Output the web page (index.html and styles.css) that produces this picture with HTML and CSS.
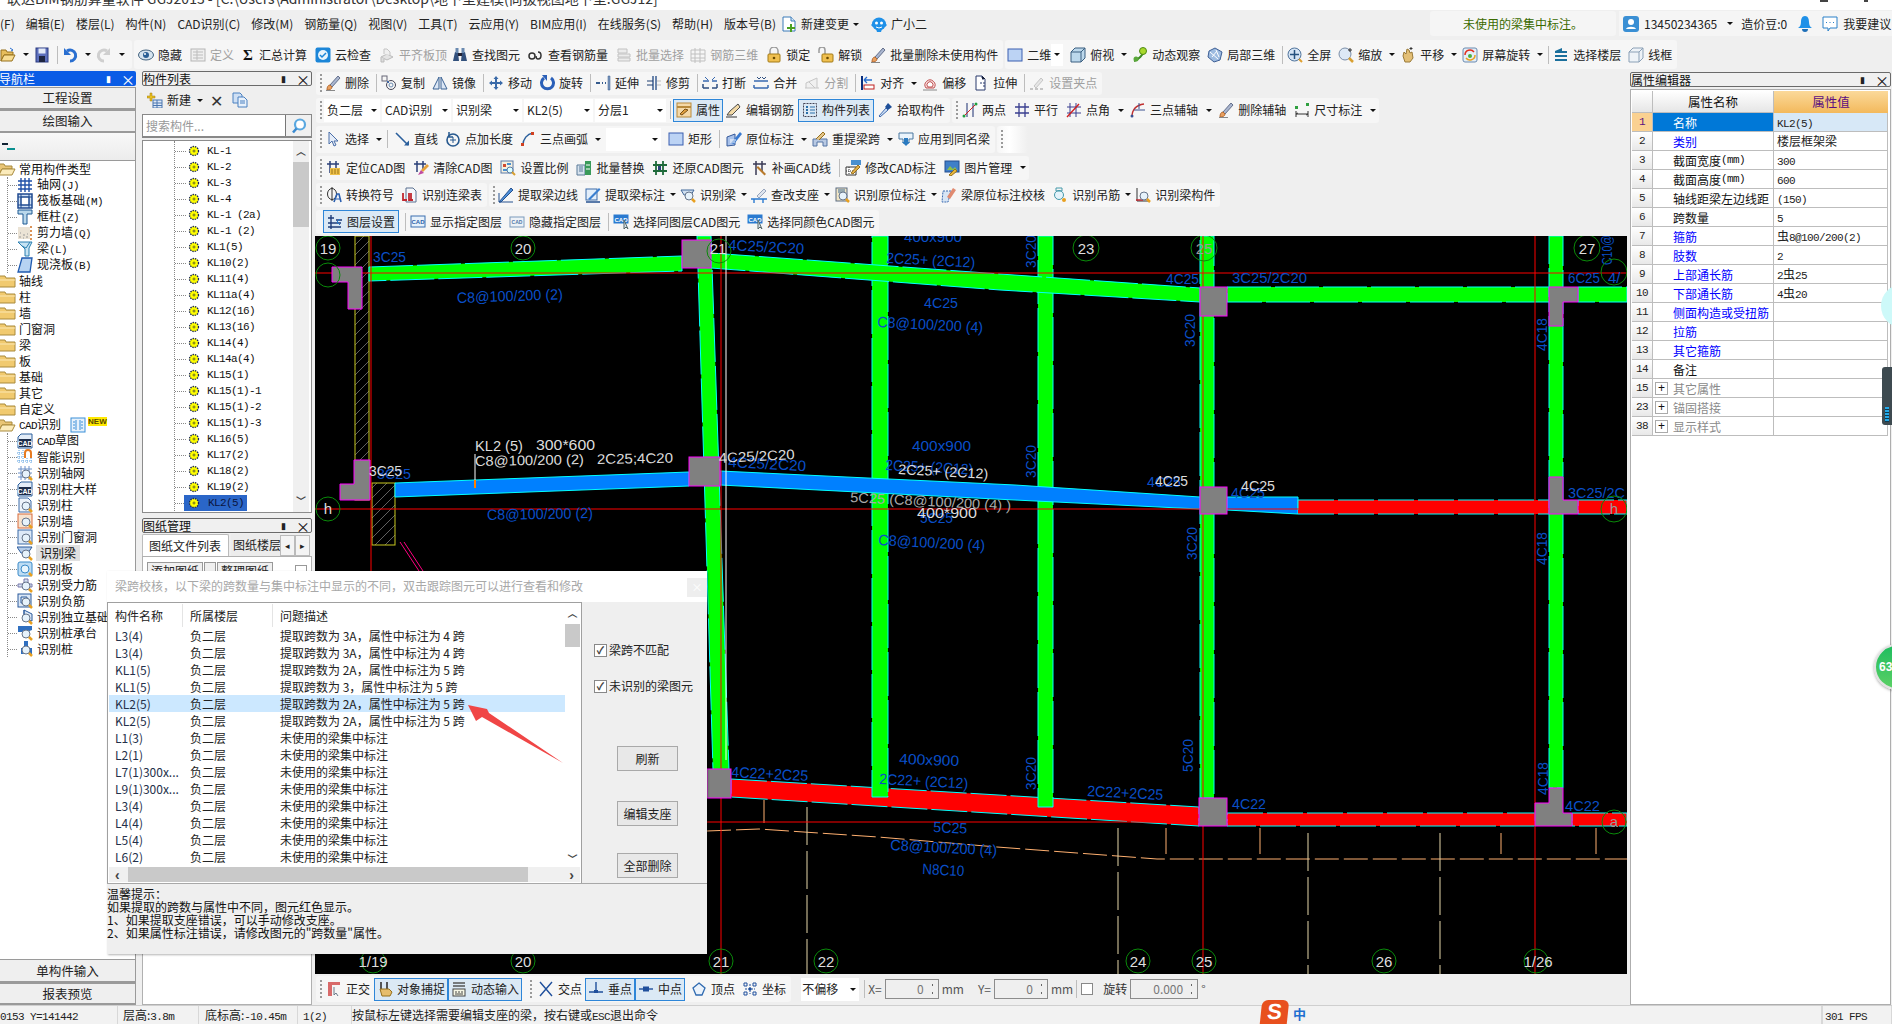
FILE: index.html
```html
<!DOCTYPE html>
<html lang="zh-CN">
<head>
<meta charset="utf-8">
<title>广联达BIM钢筋算量软件 GGJ2013</title>
<link rel="stylesheet" href="styles.css">
</head>
<body>
<svg class="defs" xmlns="http://www.w3.org/2000/svg">
<defs>
<symbol id="open" viewBox="0 0 16 16"><path d="M1 3h5l1 2h6v3H4l-3 6z" fill="#e6bd5c" stroke="#96701c"/><path d="M4 8h11l-3 6H1z" fill="#f7dc92" stroke="#96701c"/><path d="M10 1l3 2-2 1" fill="none" stroke="#2a6fd0"/></symbol>
<symbol id="save" viewBox="0 0 16 16"><rect x="2" y="1" width="12" height="14" fill="#5d6fbc" stroke="#2a3a80"/><rect x="4.500" y="1.500" width="7" height="5" fill="#e4eaf7"/><rect x="5" y="9" width="6" height="6" fill="#1d2440"/></symbol>
<symbol id="undo" viewBox="0 0 16 16"><path d="M5 4A5.500 5.500 0 1 1 8 14" fill="none" stroke="#2a6fd0" stroke-width="3"/><path d="M2 1v7h7z" fill="#2a6fd0"/></symbol>
<symbol id="redo" viewBox="0 0 16 16"><path d="M11 4A5.500 5.500 0 1 0 8 14" fill="none" stroke="#cfcfcf" stroke-width="3"/><path d="M14 1v7H7z" fill="#cfcfcf"/></symbol>
<symbol id="eye" viewBox="0 0 16 16"><ellipse cx="8" cy="8" rx="7.500" ry="5" fill="#d6e4ef" stroke="#40607c"/><circle cx="8" cy="8" r="3" fill="#2a5f95"/><circle cx="7" cy="7" r="1" fill="#fff"/></symbol>
<symbol id="def" viewBox="0 0 16 16"><rect x="1" y="2" width="14" height="12" fill="#efefef" stroke="#b5b5b5"/><path d="M3 5h10M3 8h10M3 11h10M7 3v10" stroke="#bdbdbd"/></symbol>
<symbol id="cloud" viewBox="0 0 16 16"><rect x="0.500" y="0.500" width="15" height="15" rx="2" fill="#1c86d8"/><circle cx="8" cy="8" r="5" fill="#e8f4fc"/><path d="M5 8l2 2 4-4" fill="none" stroke="#1c86d8" stroke-width="1.500"/></symbol>
<symbol id="flat" viewBox="0 0 16 16"><path d="M2 10l6-3 6 3-6 3z" fill="#e4e4e4" stroke="#bbb"/><path d="M5 7V2h3l3 3v3" fill="#f0f0f0" stroke="#c4c4c4"/><path d="M2 10v5h3v-3" fill="#ddd" stroke="#bbb"/></symbol>
<symbol id="binoc" viewBox="0 0 16 16"><path d="M1 14l2-9h3l1 9zM9 14l1-9h3l2 9z" fill="#32507c"/><rect x="3.500" y="1" width="3" height="5" fill="#6a8ab0"/><rect x="9.500" y="1" width="3" height="5" fill="#6a8ab0"/><rect x="6" y="6" width="4" height="3" fill="#223"/></symbol>
<symbol id="look" viewBox="0 0 16 16"><circle cx="4" cy="9" r="3" fill="none" stroke="#333" stroke-width="1.500"/><path d="M10 5c4 0 4 7 0 7-2 0-2-2-2-3" fill="none" stroke="#333" stroke-width="1.500"/></symbol>
<symbol id="batch" viewBox="0 0 16 16"><path d="M2 2h9v4H2zM2 7h12v3H2zM2 11h12v3H2z" fill="#ececec" stroke="#c2c2c2"/></symbol>
<symbol id="cage" viewBox="0 0 16 16"><path d="M1 3h14v11H1zM5 1v15M10 1v15M1 7h14M1 11h14" fill="none" stroke="#c0c0c0"/></symbol>
<symbol id="lock" viewBox="0 0 16 16"><path d="M4 7V4a4 4 0 0 1 8 0v3" fill="none" stroke="#9b9b9b" stroke-width="1.500"/><rect x="2" y="7" width="12" height="8" rx="1" fill="#f0c050" stroke="#a37a16"/><circle cx="8" cy="11" r="1.300" fill="#6a4a00"/></symbol>
<symbol id="unlock" viewBox="0 0 16 16"><path d="M1 6V3a3 3 0 0 1 6 0v4" fill="none" stroke="#9b9b9b" stroke-width="1.500"/><rect x="4" y="7" width="11" height="8" rx="1" fill="#f0c050" stroke="#a37a16"/><circle cx="9.500" cy="11" r="1.300" fill="#6a4a00"/></symbol>
<symbol id="brush" viewBox="0 0 16 16"><path d="M5 10L13 1l2 2-8 9z" fill="#aab6cf" stroke="#64708c"/><path d="M2 15c0-3 1-5 3-5l2 2c0 2-2 3-5 3z" fill="#e8a060" stroke="#b56a30"/><path d="M1 15.500h9" stroke="#888"/></symbol>
<symbol id="sq2d" viewBox="0 0 16 16"><rect x="1" y="2" width="14" height="12" fill="#bcd3f4" stroke="#3a5fb0"/></symbol>
<symbol id="cube" viewBox="0 0 16 16"><path d="M1 5l4-4h10v10l-4 4H1z" fill="#bcd8ec" stroke="#3a5f80"/><path d="M1 5h10v10M11 5l4-4" fill="none" stroke="#3a5f80"/></symbol>
<symbol id="orbit" viewBox="0 0 16 16"><path d="M2 14c4-1 9-6 11-11" fill="none" stroke="#3b8a20" stroke-width="2"/><circle cx="11" cy="4" r="3.500" fill="#a9d82c" stroke="#4e8a14"/><circle cx="4" cy="12" r="2.500" fill="#5aa83a"/></symbol>
<symbol id="part3d" viewBox="0 0 16 16"><path d="M8 1l7 4-2 8-6 2-6-5 1-6z" fill="#9dbbe0" stroke="#3e5f95"/><path d="M3 5l8 7M9 3l3 7M5 10l5-6" stroke="#fff"/></symbol>
<symbol id="zfull" viewBox="0 0 16 16"><circle cx="7.500" cy="7.500" r="6.500" fill="#d4e3f4" stroke="#50749c"/><path d="M7.500 3v9M3 7.500h9" stroke="#24507e" stroke-width="1.500"/><path d="M12 12l3 3" stroke="#e0a030" stroke-width="2"/></symbol>
<symbol id="zin" viewBox="0 0 16 16"><circle cx="7" cy="7" r="6" fill="#dde9f6" stroke="#7b8ea8"/><path d="M11 11l4 4" stroke="#d9a030" stroke-width="2.500"/><path d="M12 1v4M10 3h4" stroke="#333"/></symbol>
<symbol id="hand" viewBox="0 0 16 16"><path d="M3 9l1-4 2 2 1-5 2 1 1 3 2-1 1 6-3 4H5z" fill="#e3bf76" stroke="#9a7a38"/><path d="M11 0v3M9.500 1.500h3" stroke="#333"/></symbol>
<symbol id="rot" viewBox="0 0 16 16"><rect x="1" y="1" width="14" height="14" rx="2" fill="#e4eef7" stroke="#6a8ab0"/><path d="M3 8a5 5 0 0 1 9-3" fill="none" stroke="#e03020" stroke-width="1.500"/><path d="M13 8a5 5 0 0 1-9 3" fill="none" stroke="#e8a020" stroke-width="1.500"/><circle cx="8" cy="9" r="2" fill="#4bb040"/></symbol>
<symbol id="layers" viewBox="0 0 16 16"><path d="M2 4l7-3v3h5v2H2zM2 8h12v2H2zM2 12h12v2H2z" fill="#1a6f9c"/></symbol>
<symbol id="wire" viewBox="0 0 16 16"><path d="M1 5l4-4h10v10l-4 4H1zM1 5h10v10M11 5l4-4" fill="#eef3f8" stroke="#8ba0b6"/></symbol>
<symbol id="copy" viewBox="0 0 16 16"><rect x="1" y="1" width="5" height="5" fill="none" stroke="#667"/><circle cx="10" cy="10" r="4.500" fill="none" stroke="#445"/><circle cx="10" cy="10" r="2" fill="none" stroke="#6a8ab0"/><path d="M6 6l2 2" stroke="#2a6fd0"/></symbol>
<symbol id="mirror" viewBox="0 0 16 16"><path d="M7 2v12H1zM9 2v12h6z" fill="#dce7f5" stroke="#3b6294"/></symbol>
<symbol id="move" viewBox="0 0 16 16"><path d="M8 1l2.500 3H9v3h3V5.500l3 2.500-3 2.500V9H9v3h1.500L8 15l-2.500-3H7V9H4v1.500L1 8l3-2.500V7h3V4H5.500z" fill="#3a6aa8"/></symbol>
<symbol id="rotate" viewBox="0 0 16 16"><path d="M5 3A6 6 0 1 0 12 3" fill="none" stroke="#2a5fb8" stroke-width="3"/><path d="M3 0h5v6z" fill="#2a5fb8"/></symbol>
<symbol id="extend" viewBox="0 0 16 16"><path d="M1 8h4M7 8h1M10 8h1" stroke="#345a8c" stroke-width="2"/><path d="M13 1h2v14h-2z" fill="#7d99bf" stroke="#345a8c" stroke-width=".5"/></symbol>
<symbol id="trim" viewBox="0 0 16 16"><path d="M7 1v14M10 1v14" stroke="#3d5f92" stroke-width="1.500"/><path d="M1 6h6M1 10h6" stroke="#1f3f72" stroke-width="1.200"/><path d="M11 6h4M11 10h4" stroke="#bbb"/></symbol>
<symbol id="break" viewBox="0 0 16 16"><path d="M1 6h6M10 6h5" stroke="#3a6ab0" stroke-width="1.500"/><path d="M1 13h6M10 13h5M1 9v4M15 9v4" stroke="#2f4f80" stroke-width="1.500"/><path d="M3 2l3 3M13 2l-3 3" stroke="#3a6ab0"/></symbol>
<symbol id="merge" viewBox="0 0 16 16"><path d="M1 6h14M1 13h14M1 10v3M15 10v3" stroke="#3a6ab0" stroke-width="1.500"/><path d="M4 2l2 2 2-2M9 2l2 2 2-2" fill="none" stroke="#2f4f80"/></symbol>
<symbol id="split" viewBox="0 0 16 16"><path d="M1 13h14M2 13V8l11-5v10M5 7l6 6" fill="#f0f0f0" stroke="#c6c6c6"/></symbol>
<symbol id="align" viewBox="0 0 16 16"><path d="M2 1v14" stroke="#0a2f80" stroke-width="2"/><rect x="4" y="10" width="10" height="4" fill="#fff" stroke="#c02020"/><path d="M4 5h8M4 5l3-3M4 5l3 3" fill="none" stroke="#2a6fd0" stroke-width="1.300"/></symbol>
<symbol id="offset" viewBox="0 0 16 16"><path d="M4 13a5 5 0 1 1 8 0z" fill="#f9e0e0" stroke="#c05050"/><path d="M6 12a3 3 0 1 1 4 0z" fill="#fff" stroke="#c05050"/><path d="M1 15h14" stroke="#888"/></symbol>
<symbol id="stretch" viewBox="0 0 16 16"><path d="M3 1h6l3 3v11H3z" fill="#fff" stroke="#2a3a6c"/><path d="M9 1v3h3M7 8h5M12 11h-2" stroke="#2a3a6c" stroke-dasharray="2 1"/></symbol>
<symbol id="grip" viewBox="0 0 16 16"><path d="M5 11l7-8 2 2-7 8z" fill="#e6e6e6" stroke="#c5c5c5"/><path d="M1 14h3M6 14h3M11 14h3" stroke="#c5c5c5" stroke-width="2"/></symbol>
<symbol id="prop" viewBox="0 0 16 16"><rect x="1" y="1" width="14" height="14" fill="#f5d9a8" stroke="#b98a3c"/><path d="M1 5h14" stroke="#b98a3c" stroke-width="2"/><path d="M4 12l5-5 3 1-6 5z" fill="#e0a040" stroke="#7a5014"/></symbol>
<symbol id="edit" viewBox="0 0 16 16"><path d="M1 13h5l8-8-2-3-8 7z" fill="#f2d9a6" stroke="#4a4a4a"/><path d="M0 15h11" stroke="#333"/></symbol>
<symbol id="list" viewBox="0 0 16 16"><rect x="1.500" y="1.500" width="13" height="13" fill="none" stroke="#445" stroke-dasharray="2 1"/><path d="M4 4h2v2H4zM4 7h2v2H4zM4 10h2v2H4z" fill="#2a6fa8"/><path d="M8 5h5M8 8h5M8 11h5" stroke="#2a6fa8"/></symbol>
<symbol id="pick" viewBox="0 0 16 16"><path d="M2 14l7-8 2 2-8 7z" fill="#cfe0f4" stroke="#3f6ab0"/><path d="M8 5l3-4 4 4-4 3z" fill="#1f4f98"/></symbol>
<symbol id="twop" viewBox="0 0 16 16"><path d="M5 1v14M11 1v14" stroke="#1a2f70"/><path d="M2 14L14 2" stroke="#d02020"/><circle cx="2" cy="14" r="1.500" fill="#20a040"/><circle cx="14" cy="2" r="1.500" fill="#20a040"/></symbol>
<symbol id="para" viewBox="0 0 16 16"><path d="M5 1v14M11 1v14M1 5h14M1 11h14" stroke="#3a3f90" stroke-width="1.300"/></symbol>
<symbol id="ptang" viewBox="0 0 16 16"><path d="M4 1v14M10 1v14M1 5h14M1 11h14" stroke="#3a3f90"/><path d="M1 15L13 2" stroke="#d02020" stroke-width="1.400"/></symbol>
<symbol id="arc3" viewBox="0 0 16 16"><path d="M2 15C2 7 7 3 14 2" fill="none" stroke="#c03030" stroke-width="1.300"/><path d="M4 8h11M9 1v6" stroke="#3a5090"/><circle cx="2" cy="14" r="1.500" fill="#3a5090"/></symbol>
<symbol id="dim" viewBox="0 0 16 16"><path d="M2 12h12M2 9v6M14 9v6M2 12l2-1M14 12l-2 1" stroke="#333"/><rect x="1" y="4" width="3" height="3" fill="#30a040"/><rect x="12" y="1" width="3" height="3" fill="#30a040"/></symbol>
<symbol id="cursor" viewBox="0 0 16 16"><path d="M4 1v12l3-3 2 5 2-1-2-4h4z" fill="#e4ecf8" stroke="#4a6ea8"/></symbol>
<symbol id="line" viewBox="0 0 16 16"><path d="M2 2l12 12" stroke="#2a5f9c" stroke-width="1.600"/><path d="M10 14.500h5v-5z" fill="#2a5f9c"/></symbol>
<symbol id="ptlen" viewBox="0 0 16 16"><circle cx="8" cy="9" r="6" fill="none" stroke="#27598f" stroke-width="1.600"/><path d="M8 6v6M5 9h6" stroke="#27598f"/><path d="M4 1v5h4" fill="none" stroke="#27598f" stroke-width="1.500"/></symbol>
<symbol id="arc" viewBox="0 0 16 16"><path d="M3 14C3 8 7 3 13 2" fill="none" stroke="#2a5f9c" stroke-width="1.500"/><rect x="1" y="12" width="3" height="3" fill="#d04020"/><rect x="11" y="1" width="3" height="3" fill="#d04020"/></symbol>
<symbol id="orig" viewBox="0 0 16 16"><path d="M1 6l8-3v11l-8 1z" fill="#a9c2ea" stroke="#34599a"/><path d="M5 12L14 1l2 2-8 10z" fill="#3a7ad0"/><path d="M4 9h6M4 11h5" stroke="#fff"/></symbol>
<symbol id="remap" viewBox="0 0 16 16"><path d="M1 15V8h14v7h-4v-4H5v4z" fill="#b8c9e3" stroke="#5574a4"/><path d="M4 8L11 1l2 2-6 6" fill="#e3c48a" stroke="#96701c"/></symbol>
<symbol id="apply" viewBox="0 0 16 16"><path d="M1 2h14v6h-4v4H5V8H1z" fill="#eaf4fc" stroke="#49779f"/><path d="M6 7h4v4h2l-4 4-4-4h2z" fill="#2a7ac0"/></symbol>
<symbol id="cadp" viewBox="0 0 16 16"><path d="M4 1v12M10 1v12M1 4h12" stroke="#2a3f78" stroke-width="1.500"/><path d="M4 8h10v7H4z" fill="#efc14a"/><path d="M6 9v5M9 9v5M12 9v5" stroke="#9a7416"/></symbol>
<symbol id="cadc" viewBox="0 0 16 16"><path d="M4 1v11M10 1v9M1 4h12" stroke="#2a3f78" stroke-width="1.500"/><path d="M8 10l6-6 2 2-6 6z" fill="#e6a23c"/><path d="M5 15l3-5 3 3z" fill="#c04aa0"/></symbol>
<symbol id="scale" viewBox="0 0 16 16"><rect x="1" y="1" width="12" height="12" fill="#f5f0df" stroke="#5a7ba8"/><path d="M3 4h3v3H3z" fill="#d04a30"/><path d="M7 3h4v2H7zM3 9h4v2H3z" fill="#4a90d0"/><circle cx="10" cy="10" r="3" fill="#dff" stroke="#5a7ba8"/><path d="M12 12l3 3" stroke="#d9a030" stroke-width="2"/></symbol>
<symbol id="brep" viewBox="0 0 16 16"><path d="M1 5h8v10H1z" fill="#d6e2ee" stroke="#5a7b98"/><path d="M3 7h4M3 9h4M3 11h4" stroke="#5a7b98"/><path d="M9 1h6v14h-6" fill="#3a9a5a"/><path d="M10 5h4M10 9h4" stroke="#fff"/></symbol>
<symbol id="cadr" viewBox="0 0 16 16"><path d="M4 1v14M11 1v14M1 5h14M1 11h14" stroke="#1e6a3a" stroke-width="1.800"/><path d="M6 6h3v4H6z" fill="#2a3f78"/></symbol>
<symbol id="cada" viewBox="0 0 16 16"><path d="M4 1v14M10 1v11M1 4h13" stroke="#3a3a55" stroke-width="1.500"/><path d="M6 6l8 8-1.500 1.500-8-8z" fill="#b87a2c"/></symbol>
<symbol id="cadm" viewBox="0 0 16 16"><path d="M1 7h10v8H1z" fill="#fff" stroke="#333"/><path d="M4 7v8M1 11h10" stroke="#333" stroke-dasharray="1 1"/><path d="M6 13L13 5l2 2-7 7z" fill="#e3b04a" stroke="#96701c"/><rect x="6" y="0" width="10" height="5" fill="#4a90d0"/></symbol>
<symbol id="pic" viewBox="0 0 16 16"><rect x="1" y="1" width="14" height="11" fill="#3f7fc8" stroke="#254f90"/><path d="M3 10l3-4 3 3 2-2 2 3z" fill="#8cc04a"/><path d="M5 15l6-6 2 2-6 5z" fill="#e8b83c" stroke="#96701c"/></symbol>
<symbol id="conv" viewBox="0 0 16 16"><ellipse cx="6" cy="7" rx="4.500" ry="5.500" fill="none" stroke="#333"/><path d="M6 0v14" stroke="#333"/><path d="M8 15l3-8h2l2 8" fill="none" stroke="#2a5fb0" stroke-width="1.600"/><path d="M10 12h4" stroke="#2a5fb0"/></symbol>
<symbol id="lbt" viewBox="0 0 16 16"><path d="M4 1h7l3 3v11H4z" fill="#f4f7fb" stroke="#5a7090"/><path d="M1 6v7h4M7 6v7h4M9 6v7" fill="none" stroke="#c02830" stroke-width="1.800"/></symbol>
<symbol id="ext1" viewBox="0 0 16 16"><path d="M1 15L13 1l2 2L3 15z" fill="#4f90d8" stroke="#24508f"/><path d="M1 6v9h14" fill="none" stroke="#24508f"/></symbol>
<symbol id="ext2" viewBox="0 0 16 16"><rect x="1" y="2" width="11" height="11" fill="#e3eefa" stroke="#3a6aa8"/><path d="M3 12L14 1l1.500 1.500L5 13z" fill="#3a7fd0"/><path d="M1 15h14" stroke="#24508f" stroke-width="1.500"/></symbol>
<symbol id="mag" viewBox="0 0 16 16"><circle cx="9" cy="9" r="4" fill="#e6f2fb" stroke="#67758a"/><path d="M12 12l3 3" stroke="#e8a020" stroke-width="2.500"/></symbol>
<symbol id="idb" viewBox="0 0 16 16"><path d="M1 3h13l-3 5H4z" fill="#cfdff0" stroke="#41689a"/><use href="#mag"/></symbol>
<symbol id="seat" viewBox="0 0 16 16"><path d="M6 9l7-7 2 2-7 7z" fill="#dfe5ee" stroke="#97a5bd"/><path d="M0 12h16M3 12v4M12 12v4" stroke="#2a7ad0" stroke-width="1.400"/></symbol>
<symbol id="ido" viewBox="0 0 16 16"><rect x="2" y="1" width="11" height="13" fill="#f2e6c6" stroke="#5a6b80"/><path d="M4 3h7M4 5h7" stroke="#3a6a98"/><use href="#mag"/></symbol>
<symbol id="chk" viewBox="0 0 16 16"><path d="M2 4h8l-3 11H1z" fill="#d7e5f5" stroke="#3a6ab0" stroke-dasharray="2 1"/><path d="M6 10l6-9 3 2-6 9z" fill="#e08a70"/></symbol>
<symbol id="hang" viewBox="0 0 16 16"><circle cx="7" cy="8" r="4.500" fill="#e4f3fb" stroke="#49a"/><path d="M4 1h6v3H4z" fill="none" stroke="#49a"/><circle cx="12" cy="13" r="2" fill="#e8a020"/></symbol>
<symbol id="idc" viewBox="0 0 16 16"><path d="M2 1v13h12" fill="none" stroke="#333"/><path d="M1 13h7" stroke="#c02830" stroke-width="1.500"/><use href="#mag"/></symbol>
<symbol id="lay" viewBox="0 0 16 16"><path d="M4 1v14M1 4h6M1 9h13M1 13h13M9 6h6" stroke="#1e3c7a" stroke-width="1.400"/><path d="M13 5l-3 3 3 3" fill="none" stroke="#1e7ad0"/></symbol>
<symbol id="cads" viewBox="0 0 16 16"><rect x="1" y="2" width="14" height="11" fill="#e8f2fb" stroke="#3a6fb0"/><text x="8" y="10" font-size="6" text-anchor="middle" font-family="Liberation Sans" font-weight="700" fill="#2a5fa8">CAD</text></symbol>
<symbol id="cadh" viewBox="0 0 16 16"><rect x="1" y="3" width="14" height="10" fill="#eef2f7" stroke="#7a9abb"/><text x="8" y="10" font-size="5" text-anchor="middle" font-family="Liberation Sans" font-weight="700" fill="#4f78a8">CAD</text></symbol>
<symbol id="cadsel" viewBox="0 0 16 16"><rect x="0.500" y="0.500" width="15" height="9" fill="#2a7ad0"/><text x="8" y="7.500" font-size="6" text-anchor="middle" font-family="Liberation Sans" font-weight="700" fill="#fff">CAD</text><path d="M11 6v9l2-2 2 2z" fill="#dce6f2" stroke="#566"/></symbol>
<symbol id="ortho" viewBox="0 0 16 16"><path d="M2 1h12v3H6v11H2z" fill="#d86a6a"/><path d="M8 6v8l2-2 2 3" fill="none" stroke="#6a7a8a"/></symbol>
<symbol id="snap" viewBox="0 0 16 16"><path d="M4 1v7M10 1v7" stroke="#555" stroke-width="2"/><path d="M3 8h9l3 3-2 4H5z" fill="#e6bd6c" stroke="#96701c"/></symbol>
<symbol id="dyn" viewBox="0 0 16 16"><path d="M2 2h12M2 5h12" stroke="#555" stroke-width="1.300"/><rect x="2" y="8" width="12" height="7" fill="#f6f6e4" stroke="#444"/><path d="M4 11h2M7 11h2M10 11h2M4 13h8" stroke="#444"/></symbol>
<symbol id="cross" viewBox="0 0 16 16"><path d="M2 1l12 14M14 1L2 15" stroke="#1f4f9c" stroke-width="1.400"/></symbol>
<symbol id="perp" viewBox="0 0 16 16"><path d="M8 1v9M1 11h14" stroke="#1f4f9c" stroke-width="1.400"/><rect x="6" y="9" width="4" height="3" fill="#1f4f9c"/></symbol>
<symbol id="mid" viewBox="0 0 16 16"><path d="M1 8h14" stroke="#1f4f9c" stroke-width="1.400"/><rect x="5" y="5.500" width="6" height="5" fill="#1f4f9c"/></symbol>
<symbol id="vert" viewBox="0 0 16 16"><path d="M8 2l6 5-3 7H5L2 7z" fill="#eaf2fb" stroke="#2f6ab0" stroke-width="1.300"/></symbol>
<symbol id="coord" viewBox="0 0 16 16"><path d="M8 3v10M3 8h10" stroke="#1f4f9c" stroke-dasharray="2 1"/><circle cx="8" cy="8" r="1.500" fill="#1f4f9c"/><path d="M2 2h3v3H2zM11 2h3v3h-3zM2 11h3v3H2zM11 11h3v3h-3z" fill="none" stroke="#1f4f9c"/></symbol>
<symbol id="newc" viewBox="0 0 16 16"><path d="M3 1h2v3h3v2H5v3H3V6H0V4h3z" fill="#e8c020" stroke="#a07a10" stroke-width=".5"/><rect x="6" y="8" width="9" height="8" fill="#dfe9f6" stroke="#4a76b0"/><path d="M6 11h9M6 13.500h9M10 8v8" stroke="#4a76b0"/></symbol>
<symbol id="cpl" viewBox="0 0 16 16"><path d="M1 1h7l2 2v8H1z" fill="#cfe0f4" stroke="#4a80c0"/><path d="M6 5h6l3 3v7H6z" fill="#e8f1fb" stroke="#4a80c0"/><path d="M8 9h5M8 11h5" stroke="#4a80c0"/></symbol>
<symbol id="srch" viewBox="0 0 16 16"><circle cx="9" cy="6.500" r="5" fill="#fff" stroke="#5aa8e0" stroke-width="2.200"/><path d="M5.500 10.500L2 14.500" stroke="#3a8ad0" stroke-width="2.500"/></symbol>
<symbol id="gear" viewBox="0 0 12 12"><circle cx="6" cy="6" r="4.500" fill="#ff0" stroke="#13205a" stroke-width="1.300" stroke-dasharray="1.400 1"/><circle cx="6" cy="6" r="2.800" fill="#ff0"/><path d="M4.500 6h3M6 4.500v3" stroke="#6a6a20"/></symbol>
<symbol id="folder" viewBox="0 0 16 16"><path d="M-1 3h6l1 2h9v9H-1z" fill="#f1ca6f" stroke="#a98a3c"/><path d="M-1 7h16" stroke="#fbe7b3"/></symbol>
<symbol id="fold2" viewBox="0 0 16 16"><path d="M-1 3h5l1 2h7v3H2l-3 5z" fill="#e9c576" stroke="#a98a3c"/><path d="M2 8h13l-3 6H-1z" fill="#fbebbb" stroke="#a98a3c"/></symbol>
<symbol id="tgrid" viewBox="0 0 16 16"><path d="M1 4h14M1 8h14M1 12h14M4 1v14M8 1v14M12 1v14" stroke="#2050a8" stroke-width="1.400"/></symbol>
<symbol id="traft" viewBox="0 0 16 16"><rect x="1" y="1" width="14" height="14" fill="#cfe0f4" stroke="#1f4a90" stroke-width="1.500"/><rect x="4" y="4" width="8" height="8" fill="#fff" stroke="#1f4a90"/><path d="M1 4h14M1 12h14M4 1v14M12 1v14" stroke="#1f4a90"/></symbol>
<symbol id="tcol" viewBox="0 0 16 16"><path d="M1 1h14v4h-5v10H6V5H1z" fill="#b9d7ea" stroke="#1f5a94"/></symbol>
<symbol id="twall" viewBox="0 0 16 16"><rect x="1" y="2" width="12" height="12" fill="#ebe3d5"/><path d="M2 12h2M6 10h2M3 8h1M9 12h2M10 9h1M6 13h1" stroke="#999"/><path d="M13 2h2M13 6h2M13 10h2M13 14h2" stroke="#d07020" stroke-width="1.500"/></symbol>
<symbol id="tbeam" viewBox="0 0 16 16"><path d="M1 1h14l-3 6v8H8V8z" fill="#c6e3f3" stroke="#2a7fb0"/><path d="M5 5l4 2 4-6" fill="none" stroke="#2a7fb0"/></symbol>
<symbol id="tslab" viewBox="0 0 16 16"><path d="M5 1h10l-2 14H1z" fill="#b7d3f2" stroke="#1f5ab0" stroke-width="1.300"/></symbol>
<symbol id="tnew" viewBox="0 0 16 16"><rect x="1" y="1" width="14" height="14" fill="#e6f1fb" stroke="#3a8fd8"/><path d="M6 3v10M10 3v10M3 5h2M3 8h2M3 11h2M11 5h2M11 8h2M11 11h2" stroke="#3a8fd8"/></symbol>
<symbol id="tcad" viewBox="0 0 16 16"><path d="M1 4l3-3h11v14H1z" fill="#e3ecf7" stroke="#2a5f9c"/><rect x="2" y="6" width="12" height="8" fill="#1d2d4a"/><text x="8" y="13" font-size="7" text-anchor="middle" font-family="Liberation Sans" font-weight="700" fill="#fff">CAD</text></symbol>
<symbol id="tsmart" viewBox="0 0 16 16"><path d="M8 9V4a3 3 0 0 1 6 0v5" fill="none" stroke="#e67a20" stroke-width="2"/><path d="M0 4h6M0 8h6M0 12h16M2 1v14M6 1v14M10 9v6M14 9v6" stroke="#5aa0e0" stroke-dasharray="1 1"/></symbol>
<symbol id="t1" viewBox="0 0 16 16"><path d="M1 4h14M1 8h14M1 12h14M4 1v14M8 1v14M12 1v14" stroke="#6a90c8"/><use href="#mag"/></symbol>
<symbol id="t2" viewBox="0 0 16 16"><path d="M2 1h9l3 3v11H2z" fill="#eef4fb" stroke="#3a6aa8"/><use href="#mag"/></symbol>
<symbol id="t3" viewBox="0 0 16 16"><rect x="1" y="1" width="14" height="14" fill="#f8e4d0" stroke="#d86a3a"/><use href="#mag"/></symbol>
<symbol id="t4" viewBox="0 0 16 16"><rect x="1" y="1" width="14" height="14" fill="#dde9f7" stroke="#3a6aa8"/><use href="#mag"/></symbol>
<symbol id="t5" viewBox="0 0 16 16"><path d="M0 2h15l-4 6H4z" fill="#b5cdea" stroke="#2a5a9c"/><use href="#mag"/></symbol>
<symbol id="t6" viewBox="0 0 16 16"><rect x="1" y="1" width="14" height="14" rx="2" fill="#bcdcf4" stroke="#3a8ac8"/><circle cx="8" cy="8" r="4" fill="#e8f5fd" stroke="#3a8ac8"/><path d="M12 12l3 3" stroke="#e8a020" stroke-width="2.500"/></symbol>
<symbol id="t7" viewBox="0 0 16 16"><path d="M1 7h6V2h4v5h4v3H1z" fill="#d7e4f2" stroke="#77a"/><use href="#mag"/></symbol>
<symbol id="t8" viewBox="0 0 16 16"><rect x="1" y="1" width="13" height="13" fill="#dbe7f6" stroke="#2a5a9c"/><path d="M4 4h6v6H4z" fill="none" stroke="#2a5a9c"/><use href="#mag"/></symbol>
<symbol id="t9" viewBox="0 0 16 16"><path d="M7 1l8 4v7l-8-3z" fill="#dbe7f6" stroke="#2a5a9c"/><path d="M7 1v9" stroke="#2a5a9c"/><use href="#mag"/></symbol>
<symbol id="t10" viewBox="0 0 16 16"><path d="M1 1h14v4l-5 2H1z" fill="#2f6fc0"/><use href="#mag"/></symbol>
<symbol id="t11" viewBox="0 0 16 16"><path d="M7 0h4v7h4v6H4V7h3z" fill="#2f6fc0"/><use href="#mag"/></symbol>
<symbol id="docn" viewBox="0 0 16 16"><path d="M2 1h8l4 4v10H2z" fill="#fff" stroke="#3a7ab8"/><path d="M10 1v4h4" fill="#d6e8f6" stroke="#3a7ab8"/><path d="M6 11h3V8h2v3h3v2h-3v3H9v-3H6z" fill="#4aa020"/></symbol>
<symbol id="gxe" viewBox="0 0 16 16"><ellipse cx="8" cy="8" rx="7" ry="6.500" fill="#1e90e8"/><path d="M0 9l2-2v4zM16 9l-2-2v4z" fill="#1e90e8"/><circle cx="5.500" cy="7" r="1.500" fill="#fff"/><circle cx="10.500" cy="7" r="1.500" fill="#fff"/><path d="M5 11q3 2 6 0" stroke="#fff" fill="none"/><path d="M5 13h6l-1 3H6z" fill="#1e90e8"/></symbol>
<symbol id="usr" viewBox="0 0 16 16"><rect width="16" height="16" rx="3" fill="#3a8fd4"/><circle cx="8" cy="6" r="3" fill="#fff"/><path d="M3 13c1-3 9-3 10 0z" fill="#fff"/></symbol>
<symbol id="bell" viewBox="0 0 16 16"><path d="M8 0c3 0 4 3 4 6s1 5 3 6H1c2-1 3-3 3-6s1-6 4-6z" fill="#1e90e8"/><path d="M5 13h6a3 3 0 0 1-6 0z" fill="#1e6fb8"/></symbol>
<symbol id="chat" viewBox="0 0 16 16"><path d="M1 1h14v11H8l-2 3v-3H1z" fill="#fff" stroke="#2a80c8"/><path d="M4 6.500h1M7.500 6.500h1M11 6.500h1" stroke="#2a80c8"/></symbol>
<pattern id="hatch" width="10" height="10" patternUnits="userSpaceOnUse"><path d="M0 10L10 0" stroke="#8a8a8a" stroke-width=".7"/></pattern>
</defs>
</svg>

<div class="title"><span class="title-t">联达BIM钢筋算量软件 GGJ2013 - [C:\Users\Administrator\Desktop\地下室建模(尚拔视图地下室.GGJ12]</span></div>

<div class="menubar">
<span class="mi first">件(F)</span><span class="mi">编辑(E)</span><span class="mi">楼层(L)</span><span class="mi">构件(N)</span><span class="mi">CAD识别(C)</span><span class="mi">修改(M)</span><span class="mi">钢筋量(Q)</span><span class="mi">视图(V)</span><span class="mi">工具(T)</span><span class="mi">云应用(Y)</span><span class="mi">BIM应用(I)</span><span class="mi">在线服务(S)</span><span class="mi">帮助(H)</span><span class="mi">版本号(B)</span>
<span class="mi b"><svg class="i"><use href="#docn"/></svg>新建变更<i class="dd"></i></span>
<span class="mi b"><svg class="i"><use href="#gxe"/></svg>广小二</span>
<span class="notice">未使用的梁集中标注。</span>
<div class="userbox">
<svg class="i"><use href="#usr"/></svg><span class="phone">13450234365</span><i class="dd"></i><span class="bean">造价豆:0</span><svg class="i"><use href="#bell"/></svg><svg class="i chat"><use href="#chat"/></svg><span>我要建议</span>
</div>
</div>

<div class="row r1">
<div class="bar w-a">
<svg class="i"><use href="#open"/></svg><i class="dd"></i><svg class="i"><use href="#save"/></svg><i class="sep"></i><svg class="i"><use href="#undo"/></svg><i class="dd"></i><svg class="i"><use href="#redo"/></svg><i class="dd"></i>
</div>
<div class="bar">
<span class="b"><svg class="i"><use href="#eye"/></svg>隐藏</span>
<span class="b off"><svg class="i"><use href="#def"/></svg>定义</span>
<span class="b"><span class="sig">Σ</span>汇总计算</span>
<span class="b"><svg class="i"><use href="#cloud"/></svg>云检查</span>
<span class="b off"><svg class="i"><use href="#flat"/></svg>平齐板顶</span>
<span class="b l3"><svg class="i"><use href="#binoc"/></svg>查找图元</span>
<span class="b"><svg class="i"><use href="#look"/></svg>查看钢筋量</span>
<span class="b off"><svg class="i"><use href="#batch"/></svg>批量选择</span>
<span class="b off l2"><svg class="i"><use href="#cage"/></svg>钢筋三维</span>
<span class="b"><svg class="i"><use href="#lock"/></svg>锁定</span>
<span class="b"><svg class="i"><use href="#unlock"/></svg>解锁</span>
<span class="b"><svg class="i"><use href="#brush"/></svg>批量删除未使用构件</span>
</div>
<div class="bar bar-view">
<span class="b"><svg class="i"><use href="#sq2d"/></svg>二维</span>
<span class="minibox"><i class="dd"></i></span>
<span class="b"><svg class="i"><use href="#cube"/></svg>俯视</span><i class="dd"></i>
<span class="b"><svg class="i"><use href="#orbit"/></svg>动态观察</span>
<span class="b"><svg class="i"><use href="#part3d"/></svg>局部三维</span><i class="sep"></i>
<span class="b"><svg class="i"><use href="#zfull"/></svg>全屏</span>
<span class="b"><svg class="i"><use href="#zin"/></svg>缩放</span><i class="dd"></i>
<span class="b"><svg class="i"><use href="#hand"/></svg>平移</span><i class="dd"></i>
<span class="b"><svg class="i"><use href="#rot"/></svg>屏幕旋转</span><i class="dd"></i><i class="sep"></i>
<span class="b"><svg class="i"><use href="#layers"/></svg>选择楼层</span>
<span class="b"><svg class="i"><use href="#wire"/></svg>线框</span>
</div>
</div>

<div class="main">
<aside class="nav">
<div class="pt pt-blue"><span>导航栏</span><span class="pin">▮</span><span class="px">×</span></div>
<div class="navbtn nb1">工程设置</div>
<div class="navbtn">绘图输入</div>
<div class="navtool"><svg class="mini" viewBox="0 0 14 10"><path d="M0 2h6" stroke="#123" stroke-width="2"/><path d="M5 7h8" stroke="#0a8f8f" stroke-width="2"/></svg></div>
<div class="tree">
<div class="t"><svg class="i"><use href="#fold2"/></svg><span>常用构件类型</span></div>
<div class="grp">
<div class="t lf"><svg class="i"><use href="#tgrid"/></svg><span>轴网<span class="m">(J)</span></span></div>
<div class="t lf"><svg class="i"><use href="#traft"/></svg><span>筏板基础<span class="m">(M)</span></span></div>
<div class="t lf"><svg class="i"><use href="#tcol"/></svg><span>框柱<span class="m">(Z)</span></span></div>
<div class="t lf"><svg class="i"><use href="#twall"/></svg><span>剪力墙<span class="m">(Q)</span></span></div>
<div class="t lf"><svg class="i"><use href="#tbeam"/></svg><span>梁<span class="m">(L)</span></span></div>
<div class="t lf"><svg class="i"><use href="#tslab"/></svg><span>现浇板<span class="m">(B)</span></span></div>
</div>
<div class="t"><svg class="i"><use href="#folder"/></svg><span>轴线</span></div>
<div class="t"><svg class="i"><use href="#folder"/></svg><span>柱</span></div>
<div class="t"><svg class="i"><use href="#folder"/></svg><span>墙</span></div>
<div class="t"><svg class="i"><use href="#folder"/></svg><span>门窗洞</span></div>
<div class="t"><svg class="i"><use href="#folder"/></svg><span>梁</span></div>
<div class="t"><svg class="i"><use href="#folder"/></svg><span>板</span></div>
<div class="t"><svg class="i"><use href="#folder"/></svg><span>基础</span></div>
<div class="t"><svg class="i"><use href="#folder"/></svg><span>其它</span></div>
<div class="t"><svg class="i"><use href="#folder"/></svg><span>自定义</span></div>
<div class="t"><svg class="i"><use href="#fold2"/></svg><span><span class="m">CAD</span>识别</span><svg class="i newi"><use href="#tnew"/></svg><span class="newtag">NEW</span></div>
<div class="grp">
<div class="t lf"><svg class="i"><use href="#tcad"/></svg><span><span class="m">CAD</span>草图</span></div>
<div class="t lf"><svg class="i"><use href="#tsmart"/></svg><span>智能识别</span></div>
<div class="t lf"><svg class="i"><use href="#t1"/></svg><span>识别轴网</span></div>
<div class="t lf"><svg class="i"><use href="#tcad"/></svg><span>识别柱大样</span></div>
<div class="t lf"><svg class="i"><use href="#t2"/></svg><span>识别柱</span></div>
<div class="t lf"><svg class="i"><use href="#t3"/></svg><span>识别墙</span></div>
<div class="t lf"><svg class="i"><use href="#t4"/></svg><span>识别门窗洞</span></div>
<div class="t lf cur"><svg class="i"><use href="#t5"/></svg><span class="curt">识别梁</span></div>
<div class="t lf"><svg class="i"><use href="#t6"/></svg><span>识别板</span></div>
<div class="t lf"><svg class="i"><use href="#t7"/></svg><span>识别受力筋</span></div>
<div class="t lf"><svg class="i"><use href="#t8"/></svg><span>识别负筋</span></div>
<div class="t lf"><svg class="i"><use href="#t9"/></svg><span>识别独立基础</span></div>
<div class="t lf"><svg class="i"><use href="#t10"/></svg><span>识别桩承台</span></div>
<div class="t lf"><svg class="i"><use href="#t11"/></svg><span>识别桩</span></div>
</div>
</div>
<div class="navbtn nb3">单构件输入</div>
<div class="navbtn nb4">报表预览</div>
</aside>

<section class="comp">
<div class="pt"><span>构件列表</span><span class="pin">▮</span><span class="px">×</span></div>
<div class="ctool"><span class="b"><svg class="i"><use href="#newc"/></svg>新建</span><i class="dd"></i><span class="xx">✕</span><svg class="i"><use href="#cpl"/></svg></div>
<div class="search"><span class="ph">搜索构件...</span><span class="sbtn"><svg class="i"><use href="#srch"/></svg></span></div>
<div class="clist">
<div class="citems">
<div class="c"><svg class="g"><use href="#gear"/></svg><span class="m">KL-1</span></div>
<div class="c"><svg class="g"><use href="#gear"/></svg><span class="m">KL-2</span></div>
<div class="c"><svg class="g"><use href="#gear"/></svg><span class="m">KL-3</span></div>
<div class="c"><svg class="g"><use href="#gear"/></svg><span class="m">KL-4</span></div>
<div class="c"><svg class="g"><use href="#gear"/></svg><span class="m">KL-1 (2a)</span></div>
<div class="c"><svg class="g"><use href="#gear"/></svg><span class="m">KL-1 (2)</span></div>
<div class="c"><svg class="g"><use href="#gear"/></svg><span class="m">KL1(5)</span></div>
<div class="c"><svg class="g"><use href="#gear"/></svg><span class="m">KL10(2)</span></div>
<div class="c"><svg class="g"><use href="#gear"/></svg><span class="m">KL11(4)</span></div>
<div class="c"><svg class="g"><use href="#gear"/></svg><span class="m">KL11a(4)</span></div>
<div class="c"><svg class="g"><use href="#gear"/></svg><span class="m">KL12(16)</span></div>
<div class="c"><svg class="g"><use href="#gear"/></svg><span class="m">KL13(16)</span></div>
<div class="c"><svg class="g"><use href="#gear"/></svg><span class="m">KL14(4)</span></div>
<div class="c"><svg class="g"><use href="#gear"/></svg><span class="m">KL14a(4)</span></div>
<div class="c"><svg class="g"><use href="#gear"/></svg><span class="m">KL15(1)</span></div>
<div class="c"><svg class="g"><use href="#gear"/></svg><span class="m">KL15(1)-1</span></div>
<div class="c"><svg class="g"><use href="#gear"/></svg><span class="m">KL15(1)-2</span></div>
<div class="c"><svg class="g"><use href="#gear"/></svg><span class="m">KL15(1)-3</span></div>
<div class="c"><svg class="g"><use href="#gear"/></svg><span class="m">KL16(5)</span></div>
<div class="c"><svg class="g"><use href="#gear"/></svg><span class="m">KL17(2)</span></div>
<div class="c"><svg class="g"><use href="#gear"/></svg><span class="m">KL18(2)</span></div>
<div class="c"><svg class="g"><use href="#gear"/></svg><span class="m">KL19(2)</span></div>
<div class="c sel"><span class="selbox"><svg class="g"><use href="#gear"/></svg><span class="m">KL2(5)</span></span></div>
</div>
<div class="vsb"><span class="sa">︿</span><span class="thumb"></span><span class="sa down">﹀</span></div>
</div>
<div class="pt pt2"><span>图纸管理</span><span class="pin">▮</span><span class="px">×</span></div>
<div class="tabs"><span class="tab on">图纸文件列表</span><span class="tab">图纸楼层</span><span class="tarr">◂</span><span class="tarr">▸</span></div>
<div class="draw"><div class="dtool"><span class="dbtn">添加图纸</span><span class="dbtn dm">-</span><span class="dbtn">整理图纸</span><span class="more">»</span></div></div>
</section>

<section class="center">
<div class="row r2"><div class="bar">
<i class="grip"></i>
<span class="b"><svg class="i"><use href="#brush"/></svg>删除</span><i class="sep"></i>
<span class="b"><svg class="i"><use href="#copy"/></svg>复制</span>
<span class="b"><svg class="i"><use href="#mirror"/></svg>镜像</span><i class="sep"></i>
<span class="b"><svg class="i"><use href="#move"/></svg>移动</span>
<span class="b"><svg class="i"><use href="#rotate"/></svg>旋转</span><i class="sep"></i>
<span class="b"><svg class="i"><use href="#extend"/></svg>延伸</span>
<span class="b"><svg class="i"><use href="#trim"/></svg>修剪</span><i class="sep"></i>
<span class="b"><svg class="i"><use href="#break"/></svg>打断</span>
<span class="b"><svg class="i"><use href="#merge"/></svg>合并</span>
<span class="b off"><svg class="i"><use href="#split"/></svg>分割</span><i class="sep"></i>
<span class="b"><svg class="i"><use href="#align"/></svg>对齐</span><i class="dd"></i>
<span class="b"><svg class="i"><use href="#offset"/></svg>偏移</span>
<span class="b"><svg class="i"><use href="#stretch"/></svg>拉伸</span><i class="sep"></i>
<span class="b off"><svg class="i"><use href="#grip"/></svg>设置夹点</span>
</div></div>

<div class="row r3">
<div class="bar tight">
<i class="grip"></i>
<span class="combo c56">负二层<i class="dd"></i></span>
<span class="combo c69">CAD识别<i class="dd"></i></span>
<span class="combo c69">识别梁<i class="dd"></i></span>
<span class="combo c69">KL2(5)<i class="dd"></i></span>
<span class="combo c71">分层1<i class="dd"></i></span><i class="sep"></i>
<span class="b box"><svg class="i"><use href="#prop"/></svg>属性</span>
<span class="b"><svg class="i"><use href="#edit"/></svg>编辑钢筋</span>
<span class="b box bw"><svg class="i"><use href="#list"/></svg>构件列表</span>
<span class="b"><svg class="i"><use href="#pick"/></svg>拾取构件</span>
</div>
<div class="bar">
<i class="grip"></i>
<span class="b"><svg class="i"><use href="#twop"/></svg>两点</span>
<span class="b"><svg class="i"><use href="#para"/></svg>平行</span>
<span class="b"><svg class="i"><use href="#ptang"/></svg>点角</span><i class="dd"></i>
<span class="b"><svg class="i"><use href="#arc3"/></svg>三点辅轴</span><i class="dd"></i>
<span class="b"><svg class="i"><use href="#brush"/></svg>删除辅轴</span>
<span class="b"><svg class="i"><use href="#dim"/></svg>尺寸标注</span><i class="dd"></i>
</div>
</div>

<div class="row r4">
<div class="bar">
<i class="grip"></i>
<span class="b"><svg class="i"><use href="#cursor"/></svg>选择</span><i class="dd"></i><i class="sep"></i>
<span class="b"><svg class="i"><use href="#line"/></svg>直线</span>
<span class="b"><svg class="i"><use href="#ptlen"/></svg>点加长度</span>
<span class="b"><svg class="i"><use href="#arc"/></svg>三点画弧</span><i class="dd"></i>
<span class="combo c55"><i></i><i class="dd"></i></span>
<span class="b"><svg class="i"><use href="#sq2d"/></svg>矩形</span><i class="sep"></i>
<span class="b"><svg class="i"><use href="#orig"/></svg>原位标注</span><i class="dd"></i>
<span class="b"><svg class="i"><use href="#remap"/></svg>重提梁跨</span><i class="dd"></i>
<span class="b"><svg class="i"><use href="#apply"/></svg>应用到同名梁</span>
</div>
<div class="bar fade"><i class="grip"></i></div>
</div>

<div class="row r5"><div class="bar">
<i class="grip"></i>
<span class="b"><svg class="i"><use href="#cadp"/></svg>定位CAD图</span>
<span class="b"><svg class="i"><use href="#cadc"/></svg>清除CAD图</span>
<span class="b"><svg class="i"><use href="#scale"/></svg>设置比例</span>
<span class="b"><svg class="i"><use href="#brep"/></svg>批量替换</span>
<span class="b"><svg class="i"><use href="#cadr"/></svg>还原CAD图元</span>
<span class="b"><svg class="i"><use href="#cada"/></svg>补画CAD线</span><i class="sep"></i>
<span class="b"><svg class="i"><use href="#cadm"/></svg>修改CAD标注</span>
<span class="b"><svg class="i"><use href="#pic"/></svg>图片管理</span><i class="dd"></i>
</div></div>

<div class="row r6">
<div class="bar">
<i class="grip"></i>
<span class="b"><svg class="i"><use href="#conv"/></svg>转换符号</span>
<span class="b"><svg class="i"><use href="#lbt"/></svg>识别连梁表</span>
</div>
<div class="bar b6">
<i class="grip"></i>
<span class="b"><svg class="i"><use href="#ext1"/></svg>提取梁边线</span>
<span class="b"><svg class="i"><use href="#ext2"/></svg>提取梁标注</span><i class="dd"></i>
<span class="b"><svg class="i"><use href="#idb"/></svg>识别梁</span><i class="dd"></i>
<span class="b"><svg class="i"><use href="#seat"/></svg>查改支座</span><i class="dd"></i>
<span class="b"><svg class="i"><use href="#ido"/></svg>识别原位标注</span><i class="dd"></i>
<span class="b"><svg class="i"><use href="#chk"/></svg>梁原位标注校核</span>
<span class="b"><svg class="i"><use href="#hang"/></svg>识别吊筋</span><i class="dd"></i>
<span class="b"><svg class="i"><use href="#idc"/></svg>识别梁构件</span>
</div>
</div>

<div class="row r7"><div class="bar">
<span class="b box"><svg class="i"><use href="#lay"/></svg>图层设置</span><i class="sep"></i>
<span class="b"><svg class="i"><use href="#cads"/></svg>显示指定图层</span>
<span class="b"><svg class="i"><use href="#cadh"/></svg>隐藏指定图层</span><i class="sep"></i>
<span class="b"><svg class="i"><use href="#cadsel"/></svg>选择同图层CAD图元</span>
<span class="b"><svg class="i"><use href="#cadsel"/></svg>选择同颜色CAD图元</span>
</div></div>

<div class="canvas">
<svg class="cad" xmlns="http://www.w3.org/2000/svg" viewBox="315 236 1312 738" width="1312" height="738">
<rect class="hatchw" x="355" y="236" width="14" height="264"/>
<rect class="hatchw" x="372" y="483" width="23" height="62"/>
<path class="pk" d="M400 542l19 29M404 542l19 29"/>
<path class="ol" d="M707 831L759 829L878 837L997 847L1157 859H1627"/>
<path class="ot" d="M764 800v23M1166 828v26M1260 828v26M1501 833v21M1596 828v26"/>
<path class="ot2" d="M807 807V974M1118 828V974M1308 833V974M1440 833V974"/>
<polygon class="red" points="731,779 1199,807 1199,826 731,797"/>
<polygon class="red" points="1227,813 1535,813 1535,826 1227,826"/>
<polygon class="red" points="1572,813 1627,813 1627,826 1572,826"/>
<polygon class="grn" points="697,236 711,236 729,770 713,770"/>
<polygon class="grn" points="872,236 888,236 888,797 872,797"/>
<polygon class="grn" points="1038,236 1053,236 1053,807 1038,807"/>
<polygon class="grn" points="1200,236 1214,236 1214,798 1200,798"/>
<polygon class="grn" points="1549,236 1563,236 1563,788 1549,788"/>
<polygon class="grn" points="369,267 682,256 682,271 369,281"/>
<polygon class="grn" points="711,253 1000,274 1200,288 1200,302 1000,290 711,268"/>
<rect class="grn" x="1227" y="287" width="322" height="15"/>
<rect class="grn" x="1578" y="287" width="49" height="15"/>
<polygon class="blu" points="395,483 689,472 689,486 395,497"/>
<polygon class="blu" points="720,471 1015,485 1200,497 1200,509 1015,500 720,485"/>
<polygon class="blu" points="1227,497 1298,497 1298,514 1227,510"/>
<rect class="red" x="1298" y="500" width="251" height="14"/>
<rect class="red" x="1578" y="500" width="49" height="14"/>
<path class="ax" d="M315 273H1627M315 509H1627M706 822H1627M371 236V571M721 236V974M1203 236V974M1535 236V974"/>
<path class="wl" d="M726 236V760"/>
<path class="col" d="M332 267H362V309H348V282H332Z"/>
<rect class="col" x="682" y="240" width="29" height="28"/>
<rect class="col" x="1200" y="287" width="27" height="29"/>
<path class="col" d="M1549 287H1578V302H1563V326H1549Z"/>
<path class="col" d="M354 460H370V500H340V484H354Z"/>
<rect class="col" x="689" y="457" width="31" height="29"/>
<rect class="col" x="1200" y="487" width="27" height="27"/>
<path class="col" d="M1549 477H1563V500H1578V514H1549Z"/>
<rect class="col" x="707" y="769" width="24" height="29"/>
<rect class="col" x="1199" y="798" width="28" height="28"/>
<path class="col" d="M1549 788H1563V813H1572V826H1535V803H1549Z"/>
<path class="wl" d="M475 454V480"/><path class="otick" d="M475 480V488"/>
<g class="blt">
<text x="373" y="262" textLength="33" lengthAdjust="spacingAndGlyphs">3C25</text>
<text x="457" y="303" textLength="106" lengthAdjust="spacingAndGlyphs" transform="rotate(-2 457 303)">C8@100/200 (2)</text>
<text x="728" y="250" textLength="76" lengthAdjust="spacingAndGlyphs" transform="rotate(3 728 250)">4C25/2C20</text>
<text x="886" y="263" textLength="89" lengthAdjust="spacingAndGlyphs" transform="rotate(3 886 263)">2C25+ (2C12)</text>
<text x="904" y="242" textLength="58" lengthAdjust="spacingAndGlyphs">400x900</text>
<text x="924" y="308" textLength="34" lengthAdjust="spacingAndGlyphs">4C25</text>
<text x="877" y="327" textLength="106" lengthAdjust="spacingAndGlyphs" transform="rotate(3 877 327)">C8@100/200 (4)</text>
<text x="377" y="479" textLength="34" lengthAdjust="spacingAndGlyphs">3C25</text>
<text x="487" y="520" textLength="106" lengthAdjust="spacingAndGlyphs" transform="rotate(-1 487 520)">C8@100/200 (2)</text>
<text x="728" y="467" textLength="78" lengthAdjust="spacingAndGlyphs" transform="rotate(3 728 467)">4C25/2C20</text>
<text x="912" y="451" textLength="59" lengthAdjust="spacingAndGlyphs">400x900</text>
<text x="885" y="470" textLength="88" lengthAdjust="spacingAndGlyphs" transform="rotate(3 885 470)">2C25+ (2C12)</text>
<text x="920" y="523" textLength="33" lengthAdjust="spacingAndGlyphs">5C25</text>
<text x="878" y="545" textLength="107" lengthAdjust="spacingAndGlyphs" transform="rotate(3 878 545)">C8@100/200 (4)</text>
<text x="1166" y="284" textLength="33" lengthAdjust="spacingAndGlyphs">4C25</text>
<text x="1232" y="283" textLength="75" lengthAdjust="spacingAndGlyphs">3C25/2C20</text>
<text x="1568" y="283" textLength="32" lengthAdjust="spacingAndGlyphs">6C25</text>
<text x="1608" y="283">4/</text>
<text x="1147" y="487" textLength="34" lengthAdjust="spacingAndGlyphs">4C25</text>
<text x="1231" y="498" textLength="34" lengthAdjust="spacingAndGlyphs">4C25</text>
<text x="1568" y="498" textLength="57" lengthAdjust="spacingAndGlyphs">3C25/2C</text>
<text x="731" y="777" textLength="77" lengthAdjust="spacingAndGlyphs" transform="rotate(3 731 777)">4C22+2C25</text>
<text x="899" y="764" textLength="60" lengthAdjust="spacingAndGlyphs" transform="rotate(2 899 764)">400x900</text>
<text x="879" y="784" textLength="89" lengthAdjust="spacingAndGlyphs" transform="rotate(3 879 784)">2C22+ (2C12)</text>
<text x="1087" y="796" textLength="76" lengthAdjust="spacingAndGlyphs" transform="rotate(3 1087 796)">2C22+2C25</text>
<text x="1232" y="809" textLength="34" lengthAdjust="spacingAndGlyphs">4C22</text>
<text x="1565" y="811" textLength="35" lengthAdjust="spacingAndGlyphs">4C22</text>
<text x="933" y="832" textLength="34" lengthAdjust="spacingAndGlyphs" transform="rotate(3 933 832)">5C25</text>
<text x="890" y="850" textLength="107" lengthAdjust="spacingAndGlyphs" transform="rotate(3 890 850)">C8@100/200 (4)</text>
<text x="922" y="874" textLength="42" lengthAdjust="spacingAndGlyphs" transform="rotate(3 922 874)">N8C10</text>
<text x="1036" y="268" textLength="33" lengthAdjust="spacingAndGlyphs" transform="rotate(-90 1036 268)">3C20</text>
<text x="1195" y="347" textLength="33" lengthAdjust="spacingAndGlyphs" transform="rotate(-90 1195 347)">3C20</text>
<text x="1036" y="478" textLength="33" lengthAdjust="spacingAndGlyphs" transform="rotate(-90 1036 478)">3C20</text>
<text x="1197" y="560" textLength="33" lengthAdjust="spacingAndGlyphs" transform="rotate(-90 1197 560)">3C20</text>
<text x="1036" y="790" textLength="33" lengthAdjust="spacingAndGlyphs" transform="rotate(-90 1036 790)">3C20</text>
<text x="1193" y="772" textLength="33" lengthAdjust="spacingAndGlyphs" transform="rotate(-90 1193 772)">5C20</text>
<text x="1547" y="351" textLength="33" lengthAdjust="spacingAndGlyphs" transform="rotate(-90 1547 351)">4C18</text>
<text x="1547" y="565" textLength="33" lengthAdjust="spacingAndGlyphs" transform="rotate(-90 1547 565)">4C18</text>
<text x="1548" y="795" textLength="33" lengthAdjust="spacingAndGlyphs" transform="rotate(-90 1548 795)">4C18</text>
<text x="1612" y="265" textLength="30" lengthAdjust="spacingAndGlyphs" transform="rotate(-90 1612 265)">C10@</text>
</g>
<g class="wht">
<text x="475" y="451" textLength="48" lengthAdjust="spacingAndGlyphs">KL2 (5)</text>
<text x="536" y="450" textLength="59" lengthAdjust="spacingAndGlyphs">300*600</text>
<text x="475" y="466" textLength="109" lengthAdjust="spacingAndGlyphs" transform="rotate(-1 475 466)">C8@100/200 (2)</text>
<text x="597" y="464" textLength="76" lengthAdjust="spacingAndGlyphs" transform="rotate(-1 597 464)">2C25;4C20</text>
<text x="369" y="476" textLength="33" lengthAdjust="spacingAndGlyphs">3C25</text>
<text x="719" y="463" textLength="76" lengthAdjust="spacingAndGlyphs" transform="rotate(-3 719 463)">4C25/2C20</text>
<text x="898" y="474" textLength="90" lengthAdjust="spacingAndGlyphs" transform="rotate(3 898 474)">2C25+ (2C12)</text>
<text x="917" y="518" textLength="60" lengthAdjust="spacingAndGlyphs">400*900</text>
<text x="1155" y="486" textLength="33" lengthAdjust="spacingAndGlyphs">4C25</text>
<text x="1241" y="491" textLength="34" lengthAdjust="spacingAndGlyphs">4C25</text>
<text class="gy" x="850" y="502" textLength="161" lengthAdjust="spacingAndGlyphs" transform="rotate(3 850 502)">5C25 (C8@100/200 (4) )</text>
</g>
<g class="bub">
<circle cx="328" cy="248" r="12"/><circle cx="328" cy="275" r="12"/><circle cx="523" cy="248" r="12"/><circle cx="719" cy="251" r="12"/><circle cx="1086" cy="248" r="13"/><circle cx="1204" cy="248" r="13"/><circle cx="1587" cy="248" r="13"/><circle cx="1614" cy="272" r="13"/>
<circle cx="328" cy="509" r="12"/><circle cx="1614" cy="509" r="13"/><circle cx="1614" cy="822" r="12"/>
<circle cx="373" cy="961" r="12"/><circle cx="523" cy="961" r="12"/><circle cx="721" cy="961" r="12"/><circle cx="826" cy="961" r="12"/><circle cx="1138" cy="961" r="12"/><circle cx="1204" cy="961" r="12"/><circle cx="1384" cy="961" r="12"/><circle cx="1536" cy="961" r="12"/>
</g>
<g class="bt">
<text x="328" y="254">19</text><text x="523" y="254">20</text><text x="718" y="254">21</text><text x="1086" y="254">23</text><text x="1204" y="254" class="dim">25</text><text x="1587" y="254">27</text><text x="328" y="514">h</text><text x="1614" y="514" class="dim">h</text><text x="1614" y="827" class="dim">a</text>
<text x="373" y="967">1/19</text><text x="523" y="967">20</text><text x="721" y="967">21</text><text x="826" y="967">22</text><text x="1138" y="967">24</text><text x="1204" y="967">25</text><text x="1384" y="967">26</text><text x="1538" y="967">1/26</text>
</g>
</svg>
</div>

<div class="row rb">
<div class="bar tight0">
<i class="grip"></i>
<span class="b"><svg class="i"><use href="#ortho"/></svg>正交</span>
<span class="b box bx1"><svg class="i"><use href="#snap"/></svg>对象捕捉</span>
<span class="b box"><svg class="i"><use href="#dyn"/></svg>动态输入</span>
<i class="grip gb"></i>
<span class="b"><svg class="i"><use href="#cross"/></svg>交点</span>
<span class="b box bx2"><svg class="i"><use href="#perp"/></svg>垂点</span>
<span class="b box"><svg class="i"><use href="#mid"/></svg>中点</span>
<span class="b bv"><svg class="i"><use href="#vert"/></svg>顶点</span>
<span class="b bc"><svg class="i"><use href="#coord"/></svg>坐标</span>
</div>
<span class="combo cbo">不偏移<i class="dd"></i></span><i class="sep"></i>
<span class="lbl">X=</span><span class="num n54">0<i class="spin"></i></span><span class="lbl">mm</span><span class="lbl ly">Y=</span><span class="num n54">0<i class="spin"></i></span><span class="lbl">mm</span><i class="sep"></i>
<span class="cb"></span><span class="lbl2">旋转</span><span class="num n68">0.000<i class="spin"></i></span><span class="lbl">°</span>
</div>
</section>

<aside class="props">
<div class="pt"><span>属性编辑器</span><span class="pin">▮</span><span class="px">×</span></div>
<div class="pbody">
<div class="ptab">
<div class="ph0"></div><div class="ph1">属性名称</div><div class="ph2">属性值</div>
<div class="rh rs">1</div><div class="nm ns">名称</div><div class="vl vs"><span class="m">KL2(5)</span></div>
<div class="rh">2</div><div class="nm bl">类别</div><div class="vl">楼层框架梁</div>
<div class="rh">3</div><div class="nm">截面宽度<span class="m">(mm)</span></div><div class="vl"><span class="m">300</span></div>
<div class="rh">4</div><div class="nm">截面高度<span class="m">(mm)</span></div><div class="vl"><span class="m">600</span></div>
<div class="rh">5</div><div class="nm">轴线距梁左边线距</div><div class="vl"><span class="m">(150)</span></div>
<div class="rh">6</div><div class="nm">跨数量</div><div class="vl"><span class="m">5</span></div>
<div class="rh">7</div><div class="nm bl">箍筋</div><div class="vl">虫<span class="m">8@100/200(2)</span></div>
<div class="rh">8</div><div class="nm bl">肢数</div><div class="vl"><span class="m">2</span></div>
<div class="rh">9</div><div class="nm bl">上部通长筋</div><div class="vl"><span class="m">2</span>虫<span class="m">25</span></div>
<div class="rh">10</div><div class="nm bl">下部通长筋</div><div class="vl"><span class="m">4</span>虫<span class="m">20</span></div>
<div class="rh">11</div><div class="nm bl">侧面构造或受扭筋</div><div class="vl"></div>
<div class="rh">12</div><div class="nm bl">拉筋</div><div class="vl"></div>
<div class="rh">13</div><div class="nm bl">其它箍筋</div><div class="vl"></div>
<div class="rh">14</div><div class="nm">备注</div><div class="vl"></div>
<div class="rh">15</div><div class="nm gr"><span class="pl">+</span>其它属性</div><div class="vl"></div>
<div class="rh">23</div><div class="nm gr"><span class="pl">+</span>锚固搭接</div><div class="vl"></div>
<div class="rh">38</div><div class="nm gr"><span class="pl">+</span>显示样式</div><div class="vl"></div>
</div>
</div>
</aside>
</div>

<footer class="status">
<span class="st s0"><span class="m">0153 Y=141442</span></span>
<span class="st s1">层高:<span class="m">3.8m</span></span>
<span class="st s2">底标高:<span class="m">-10.45m</span></span>
<span class="st s3"><span class="m">1(2)</span></span>
<span class="st s4">按鼠标左键选择需要编辑支座的梁，按右键或<span class="m">ESC</span>退出命令</span>
<span class="st s5"><span class="m">301 FPS</span></span>
</footer>

<div class="dlg">
<div class="dlgtitle"><span>梁跨校核，以下梁的跨数量与集中标注中显示的不同，双击跟踪图元可以进行查看和修改</span><span class="dclose">×</span></div>
<div class="dlgbody">
<div class="dlist">
<div class="drows">
<div class="dr dh"><span>构件名称</span><span>所属楼层</span><span>问题描述</span></div>
<div class="dr"><span>L3(4)</span><span>负二层</span><span>提取跨数为 3A，属性中标注为 4 跨</span></div>
<div class="dr"><span>L3(4)</span><span>负二层</span><span>提取跨数为 3A，属性中标注为 4 跨</span></div>
<div class="dr"><span>KL1(5)</span><span>负二层</span><span>提取跨数为 2A，属性中标注为 5 跨</span></div>
<div class="dr"><span>KL1(5)</span><span>负二层</span><span>提取跨数为 3，属性中标注为 5 跨</span></div>
<div class="dr dsel"><span>KL2(5)</span><span>负二层</span><span>提取跨数为 2A，属性中标注为 5 跨</span></div>
<div class="dr"><span>KL2(5)</span><span>负二层</span><span>提取跨数为 2A，属性中标注为 5 跨</span></div>
<div class="dr"><span>L1(3)</span><span>负二层</span><span>未使用的梁集中标注</span></div>
<div class="dr"><span>L2(1)</span><span>负二层</span><span>未使用的梁集中标注</span></div>
<div class="dr"><span>L7(1)300x...</span><span>负二层</span><span>未使用的梁集中标注</span></div>
<div class="dr"><span>L9(1)300x...</span><span>负二层</span><span>未使用的梁集中标注</span></div>
<div class="dr"><span>L3(4)</span><span>负二层</span><span>未使用的梁集中标注</span></div>
<div class="dr"><span>L4(4)</span><span>负二层</span><span>未使用的梁集中标注</span></div>
<div class="dr"><span>L5(4)</span><span>负二层</span><span>未使用的梁集中标注</span></div>
<div class="dr"><span>L6(2)</span><span>负二层</span><span>未使用的梁集中标注</span></div>
</div>
<div class="dvsb"><span class="sa">︿</span><span class="dthumb"></span><span class="sa down">﹀</span></div>
<div class="dhsb"><span>‹</span><span class="dhthumb"></span><span>›</span></div>
</div>
<div class="dside">
<label class="ck ck1"><span class="cb on">✓</span>梁跨不匹配</label>
<label class="ck"><span class="cb on">✓</span>未识别的梁图元</label>
<span class="dbt bt1">刷新</span>
<span class="dbt bt2">编辑支座</span>
<span class="dbt bt3">全部删除</span>
</div>
</div>
<div class="tips">温馨提示：<br>如果提取的跨数与属性中不同，图元红色显示。<br>1、如果提取支座错误，可以手动修改支座。<br>2、如果属性标注错误，请修改图元的"跨数量"属性。</div>
</div>

<svg class="arrow" viewBox="0 0 110 70" width="110" height="70"><polygon points="3,5 22,9 24,13 98,63 17,17 11,21" fill="#f04646"/></svg>

<div class="sogou"><span class="sgs">S</span><span class="sgz">中</span></div>
<div class="gball"><span>63</span></div>
<div class="cyanb"></div>
<div class="dark"><i></i></div>
</body>
</html>
```
FILE: styles.css
```css
*{box-sizing:border-box}
html,body{margin:0;padding:0}
body{position:relative;width:1892px;height:1024px;overflow:hidden;background:#efefef;font:12px/16px "Noto Sans CJK SC","Liberation Sans",sans-serif;color:#222}
.defs{position:absolute;width:0;height:0}
.i{width:16px;height:16px;flex:none;display:block}
.m{font:11px/16px "Liberation Mono",monospace;letter-spacing:-.6px}

.title{height:10px;background:#fff;overflow:hidden;padding-left:7px;position:relative}
.title::before,.title::after{content:"";position:absolute;top:0;height:2px;background:#444}
.title::before{left:1820px;width:8px}
.title::after{left:1864px;width:4px}
.title-t{display:block;margin-top:-11px;font-size:14px;line-height:18px;color:#333;white-space:nowrap}

.menubar{height:30px;display:flex;align-items:center;gap:11px;position:relative;white-space:nowrap;padding-bottom:2px}
.first{margin-left:-12px}
.mi{flex:none}
.mi.b{margin-left:-6px}
.mi.b+.mi.b{margin-left:3px}
.notice{position:absolute;left:1430px;top:1px;width:186px;height:25px;background:#f5f5f5;color:#3b6a00;padding-left:33px;line-height:25px;border-radius:3px}
.userbox{position:absolute;left:1619px;top:1px;width:273px;height:25px;background:#f5f5f5;display:flex;align-items:center;padding-left:4px;gap:5px}
.phone{font-size:12px;margin-right:5px}
.bean{margin:0 5px 0 5px}
.chat{margin-left:4px}

.b{display:inline-flex;align-items:center;gap:4px;flex:none;white-space:nowrap}
.off{color:#a0a0a0}
.sig{width:13px;padding-left:1px;font:700 15px/16px "Liberation Serif",serif;color:#111}
.l3{margin-left:-3px}
.l2{margin-left:-2px}
.dd{display:block;flex:none;width:0;height:0;border:3px solid transparent;border-top:3.500px solid #111;border-bottom:0;margin-right:-2px}
.combo .dd,.minibox .dd{margin-right:0}
.sep{display:block;flex:none;width:1px;height:18px;background:#bdbdbd;margin-right:-3px}
.grip{display:block;flex:none;width:2px;height:18px;margin-right:-4px;background:repeating-linear-gradient(#9a9a9a 0 2px,transparent 2px 4px)}

.row{display:flex;align-items:center;gap:2px;padding-bottom:2px}
.bar{display:flex;align-items:center;gap:8px;height:100%;background:#f6f6f6;padding:0 5px 0 4px;border-radius:3px;flex:none}
.r1{height:31px}
.r1 .bar{height:29px;gap:8px}
.r1 .bar-view{gap:7px;padding-left:2px}
.w-a{padding-left:0;gap:7px!important;width:132px}
.minibox{width:12px;height:22px;background:#fff;display:flex;align-items:center;justify-content:center;margin-left:-7px}
.r2{height:26px;padding-left:1px}
.r2 .bar{gap:7px}
.r3{height:28px;padding-left:1px}
.r4{height:30px;padding-left:1px}
.r4 .bar{gap:7px}
.r4 .sep{margin-right:-1px}
.r5{height:27px;padding-left:1px}
.r6{height:27px;padding-left:1px}
.r6 .dd{margin:0 -3px 0 -2px}
.r7{height:27px;padding-left:1px}
.r7 .bar{gap:7px}
.rb{height:30px;padding-left:1px;gap:0;padding-bottom:0}
.center .bar{height:calc(100% - 1px)}
.tight{gap:2px}
.tight .b{margin-left:1px}
.tight .grip{margin-right:0}
.tight .sep{margin:0 0 0 2px}
.fade{width:31px;background:linear-gradient(90deg,#f6f6f6,#fff 40%,#efefef)}
.b6{gap:7px}
.box{background:#dbe9f5;outline:1px solid #2e86d8;outline-offset:-1px;padding:0 3px;height:23px}
.tight .box{margin-left:0}
.tight .bw{padding:0 4px;margin-left:2px}
.r7 .box{margin:0 -1px 0 3px;padding:0 4px}
.rb .box{height:23px}

.tight0{gap:0}
.tight0 .grip{margin-right:4px}
.tight0 .gb{margin:0 6px 0 8px}
.bx1{margin-left:4px}
.bx2{margin-left:3px}
.bv{margin-left:6px}
.bc{margin-left:7px}

.combo{display:flex;align-items:center;justify-content:space-between;height:23px;background:#fff;padding:0 3px;flex:none}
.c56{width:56px}.c69{width:69px}.c71{width:71px}.c55{width:55px}
.cbo{width:58px;margin:0 5px 0 10px;padding-left:1px}
.rb>.sep{margin-right:0}
.lbl{padding:0 3px;flex:none;color:#555}
.ly{margin-left:8px}
.lbl2{margin:0 3px 0 10px;flex:none;color:#333}
.num{display:flex;align-items:center;justify-content:flex-end;height:20px;border:1px solid #8c8c8c;background:#efefef;color:#777;position:relative;flex:none;padding-right:14px}
.n54{width:54px}.n68{width:68px}
.spin{position:absolute;right:2px;top:2px;width:7px;height:14px;border-top:0;background:linear-gradient(#666,#666) 3px 2px/1px 2px no-repeat,linear-gradient(#666,#666) 3px 10px/1px 2px no-repeat}
.cb{display:inline-flex;align-items:center;justify-content:center;width:12px;height:12px;border:1px solid #888;background:#fff;flex:none;margin-left:4px}

.main{display:flex;height:934px;align-items:stretch}
.pt{display:flex;align-items:center;height:15px;border:1px solid #6a6a6a;border-width:1px 1px 1px 0;border-radius:2px;background:#f0f0f0;color:#111;line-height:13px;flex:none}
.pt>span:first-child{flex:1}
.pin{width:10px;font-size:9px;color:#222;text-align:center;margin-right:8px;line-height:12px}
.px{width:12px;font-size:14px;text-align:center;margin-right:3px;line-height:12px}
.pt-blue{background:#0a5ce6;border:0;color:#fff;margin-left:-1px}
.pt-blue .pin,.pt-blue .px{color:#fff}

.nav{width:136px;flex:none;display:flex;flex-direction:column}
.navbtn{flex:none;height:23px;background:#efefef;border:1px solid #9a9a9a;border-left:0;border-bottom-width:2px;display:flex;align-items:center;justify-content:center;font-size:12.500px}
.nb1{margin-top:1px}
.navtool{flex:none;height:27px;display:flex;align-items:center;padding-left:2px;background:linear-gradient(#f8f8f8,#ececec);border-right:1px solid #9a9a9a}
.mini{width:14px;height:10px}
.tree{flex:1;background:#fff;border:1px solid #9a9a9a;border-width:1px 1px 0 0;overflow:hidden}
.t{display:flex;align-items:center;height:16px;gap:3px;white-space:nowrap;color:#111}
.grp{margin-left:7px;border-left:1px dotted #888}
.lf{gap:4px}
.lf::before{content:"";flex:none;width:9px;border-top:1px dotted #888;margin-right:-4px}
.curt{background:#e0e0e0;padding:0 4px;margin-left:-1px}
.newi{margin-left:6px}
.newtag{background:#ffe900;color:#5a4a00;font:700 8px/9px "Liberation Sans",sans-serif;margin:-8px 0 0 -1px}
.nb3{margin-top:auto;height:24px;background:#efefef}
.nb4{height:22px}

.comp{width:170px;margin-left:6px;flex:none;display:flex;flex-direction:column}
.comp .pt{border-left:1px solid #6a6a6a}
.ctool{height:28px;flex:none;display:flex;align-items:center;gap:6px;padding-left:5px}
.xx{font-size:16px;color:#333;margin:0 3px 0 3px}
.search{height:24px;flex:none;display:flex;border:1px solid #888;border-bottom-width:2px;background:#f0f0f0}
.ph{width:143px;background:#fff;color:#999;padding-left:3px;line-height:21px;border-right:1px solid #777}
.sbtn{flex:1;display:flex;align-items:center;justify-content:center}
.clist{height:373px;margin-top:2px;flex:none;background:#fff;border:1px solid #8c8c8c;position:relative;padding-left:31px;display:flex}
.citems{flex:1;border-left:1px dotted #888;height:370px;padding-top:2px}
.c{height:16px;display:flex;align-items:center;white-space:nowrap;color:#111}
.c::before{content:"";width:11px;flex:none;border-top:1px dotted #888}
.g{width:12px;height:12px;flex:none;margin:0 7px 0 2px}
.selbox{display:flex;align-items:center;background:#2a66c8;height:16px;margin-left:-2px;padding-left:4px;width:63px;color:#0a1540}
.selbox .g{margin:0 8px 0 0}
.vsb{width:16px;flex:none;position:relative;background:#f0f0f0;margin-right:2px;display:flex;flex-direction:column;align-items:center;height:371px}
.sa{display:block;height:21px;font-size:10px;line-height:20px;color:#444;font-weight:700}
.thumb{width:100%;height:65px;background:#c9c9c9;display:block}
.down{margin-top:auto}
.pt2{margin-top:5px}
.tabs{height:23px;flex:none;display:flex;align-items:flex-end;overflow:hidden}
.tab{height:22px;padding:0 0 0 2px;background:#ececec;white-space:nowrap;line-height:22px;width:49px;overflow:hidden;flex:none}
.tab.on{width:87px;padding-left:6px;background:#fff;border:1px solid #bbb;border-bottom:0;border-radius:2px 2px 0 0;margin-right:2px}
.tarr{width:15px;height:21px;border:1px solid #bbb;text-align:center;line-height:19px;font-size:9px;flex:none;background:#f4f4f4}
.draw{flex:1;background:#fff;border:1px solid #b0b0b0;padding:5px 4px}
.dtool{display:flex;align-items:center;gap:1px;height:20px}
.dbtn{border:1px solid #999;padding:0 3px;height:20px;background:#f0f0f0;white-space:nowrap}
.dm{width:12px;padding:0;text-align:center}
.more{margin-left:auto;border:1px solid #999;width:12px;height:14px;line-height:12px;text-align:center;font-size:11px;font-weight:700}

.center{width:1312px;margin-left:3px;flex:none;display:flex;flex-direction:column}
.canvas{height:738px;flex:none;background:#000;overflow:hidden}
.cad{display:block}
.rb{background:#efefef}
.rb .bar{height:26px}

.grn{fill:#00ff00;stroke:#00ffff;stroke-width:1;stroke-dasharray:44 4}
.blu{fill:#0080ff;stroke:#00ffff;stroke-width:1}
.red{fill:#ff0000;stroke:#00ffff;stroke-width:1;stroke-dasharray:36 4}
.col{fill:#808080;stroke:#ff00ff;stroke-width:1}
.ax{fill:none;stroke:#ff0000;stroke-width:1}
.wl{fill:none;stroke:#fff;stroke-width:1}
.otick{fill:none;stroke:#ff8000;stroke-width:2}
.pk{fill:none;stroke:#ff0080;stroke-width:1}
.ol{fill:none;stroke:#ffb070;stroke-width:1;stroke-dasharray:24 5}
.ot{fill:none;stroke:#ffb070;stroke-width:1}
.ot2{fill:none;stroke:#e6d8aa;stroke-width:1;stroke-dasharray:38 6}
.hatchw{fill:url(#hatch);stroke:#c8c820;stroke-width:1}
.blt text{fill:#0a4fc8;font:15px "Liberation Sans",sans-serif}
.wht text{fill:#dcdcdc;font:14px "Liberation Sans",sans-serif}
.wht .gy{fill:#aaa}
.bub circle{fill:none;stroke:#0a8a0a;stroke-width:1}
.bt text{fill:#ddd;font:15px "Liberation Sans",sans-serif;text-anchor:middle}
.bt .dim{fill:#9a9a9a}

.props{width:262px;margin-left:3px;flex:none;display:flex;flex-direction:column;padding-top:1px}
.props .pt{border-left:1px solid #6a6a6a;border-right:1px solid #6a6a6a;margin-right:1px}
.pbody{flex:1;background:#fff;border:1px solid #aeaeae;margin:2px 1px 0 0;padding:1px}
.ptab{display:grid;grid-template-columns:21px 121px 114px;grid-auto-rows:19px;grid-template-rows:22px}
.ph0,.ph1{background:linear-gradient(#fff,#e6e6e6);border-right:1px solid #bdbdbd;border-bottom:1px solid #bdbdbd}
.ph1{text-align:center;line-height:22px;color:#111;font-size:12.500px}
.ph2{background:linear-gradient(#fbd99a,#f3b95c);text-align:center;line-height:22px;color:#5a0f80;font-size:12.500px}
.rh{background:linear-gradient(#fff,#e8e8e8);border-right:1px solid #bdbdbd;border-bottom:1px solid #bdbdbd;text-align:center;font:11px/18px "Liberation Mono",monospace;letter-spacing:-.6px;color:#222}
.rs{background:#fad191;color:#5a0f80}
.nm{padding-left:20px;border-right:1px solid #bdbdbd;border-bottom:1px solid #bdbdbd;line-height:19px;white-space:nowrap;color:#111;display:flex;align-items:center}
.vl{padding-left:3px;border-right:1px solid #bdbdbd;border-bottom:1px solid #bdbdbd;line-height:18px;white-space:nowrap;color:#222}
.ns{background:#0078d7;color:#fff}
.vs{background:#d7e8f7}
.bl{color:#0000ff}
.gr{color:#8a8a8a;padding-left:2px;gap:5px}
.pl{display:inline-flex;align-items:center;justify-content:center;width:13px;height:13px;border:1px solid #aaa;color:#111;font:12px/11px "Liberation Sans",sans-serif}

.status{display:flex;height:19px;background:#f2f2f2;border-top:1px solid #cfcfcf;white-space:nowrap}
.st{display:block;flex:none;line-height:18px;border-right:1px solid #d8d8d8;overflow:hidden;padding-left:2px}
.s0{width:118px;padding-left:0}
.s1{width:81px;padding-left:5px}
.s2{width:99px;padding-left:6px}
.s3{width:54px;padding-left:5px}
.s4{width:1470px;padding-left:0}
.s5{width:70px;padding-left:2px;border-left:1px solid #d8d8d8}

.dlg{position:absolute;left:107px;top:571px;width:600px;height:383px;background:#efefef;display:flex;flex-direction:column;box-shadow:1px 1px 2px rgba(0,0,0,.3)}
.dlgtitle{height:31px;flex:none;background:#fff;color:#a8a8a8;padding:7px 0 0 8px;display:flex;justify-content:space-between;white-space:nowrap}
.dclose{display:block;width:20px;height:19px;background:#eee;color:#fff;text-align:center;font-size:11px;line-height:18px}
.dlgbody{display:flex;height:282px;flex:none;border-bottom:1px solid #a8a8a8}
.dlist{width:475px;flex:none;position:relative;background:#fff;border:1px solid #a0a0a0;border-bottom:0}
.drows{padding:1px 0 0 1px;width:457px}
.dr{display:grid;grid-template-columns:75px 90px 1fr;height:17px;line-height:17px;padding-left:6px;color:#24304a;white-space:nowrap}
.dr span:nth-child(2),.dr span:nth-child(3){color:#222}
.dh{height:23px;line-height:23px;color:#222;background:linear-gradient(90deg,transparent 73px,#e4e4e4 73px,#e4e4e4 74px,transparent 74px,transparent 163px,#e4e4e4 163px,#e4e4e4 164px,transparent 164px)}
.dh span{color:#222}
.dsel{background:#cce8ff}
.dvsb{position:absolute;right:1px;top:0;width:15px;height:264px;display:flex;flex-direction:column;align-items:center;background:#fff}
.dthumb{width:100%;height:23px;background:#c9c9c9;display:block}
.dvsb .down{line-height:26px}
.dhsb{position:absolute;left:1px;right:1px;bottom:1px;height:15px;background:#f0f0f0;display:flex;align-items:center;justify-content:space-between;font:700 14px/14px "Liberation Sans",sans-serif;color:#444}
.dhsb span:first-child{margin-left:6px}
.dhsb span:last-child{margin-right:6px}
.dhthumb{width:400px;height:15px;background:#c9c9c9;margin:0 auto 0 8px}
.dside{flex:1;position:relative;padding:40px 0 0 12px;background:#efefef}
.ck{display:flex;align-items:center;gap:2px;height:16px;margin-bottom:20px;white-space:nowrap;color:#222}
.ck .cb{width:13px;height:13px;margin-left:0;font:700 10px/11px "Liberation Sans",sans-serif;color:#444}
.dbt{position:absolute;left:35px;width:61px;height:25px;display:flex;align-items:center;justify-content:center;background:#e8e8e8;border:1px solid #a9a9a9}
.bt1{top:144px}.bt2{top:199px}.bt3{top:251px}
.tips{flex:1;line-height:13px;padding:3px 0 0 0;color:#111;font-size:12px;overflow:hidden;white-space:nowrap}
.arrow{position:absolute;left:465px;top:700px}

.sogou{position:absolute;left:1261px;top:1000px;display:flex;align-items:center}
.sgs{display:block;width:27px;height:24px;background:#e8501e;color:#fff;font:700 22px/24px "Liberation Sans",sans-serif;text-align:center;border-radius:6px 6px 0 0;transform:skewX(-6deg)}
.sgz{color:#1e6fd0;font-weight:700;font-size:13px;margin-left:5px;margin-top:4px}
.gball{position:absolute;left:1874px;top:644px;width:46px;height:46px;border-radius:50%;background:linear-gradient(#1fbd5f,#5bd065);border:2px solid #e2e2e2;box-shadow:0 1px 3px rgba(0,0,0,.35);color:#fff;font:700 12px/42px "Liberation Sans",sans-serif;padding-left:3px}
.cyanb{position:absolute;left:1881px;top:284px;width:44px;height:44px;border-radius:50%;background:#cdf9f9}
.dark{position:absolute;left:1882px;top:367px;width:10px;height:58px;border-radius:3px 0 0 3px;background:#3d4a50;padding:40px 3px 3px 3px}
.dark i{display:block;height:100%;background:repeating-linear-gradient(#22a8e8 0 2px,#0c3a50 2px 3px)}
```
